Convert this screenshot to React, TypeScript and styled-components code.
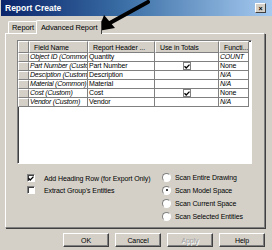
import React from 'react';
import styled, { createGlobalStyle } from 'styled-components';

const GlobalStyle = createGlobalStyle`
  html, body {
    margin: 0;
    padding: 0;
    background: #d4d0c8;
  }
  body {
    font-family: "Liberation Sans", Arial, sans-serif;
    font-size: 7px;
    letter-spacing: -0.1px;
    color: #000;
  }
`;

const Window = styled.div`
  position: relative;
  width: 272px;
  height: 250px;
  background: #d4d0c8;
  overflow: hidden;
  display: flex;
  flex-direction: column;
`;

const TitleBar = styled.div`
  height: 16px;
  margin: 0 0 0 1px;
  background: linear-gradient(to right, #0a246a 0%, #3a6ea5 45%, #a6caf0 100%);
  display: flex;
  align-items: center;
  justify-content: space-between;
  padding: 0 6px 0 4px;
`;

const Title = styled.span`
  color: #fff;
  font-weight: bold;
  font-size: 8.5px;
  letter-spacing: 0;
`;

const CloseBox = styled.div`
  width: 9px;
  height: 8px;
  background: #d4d0c8;
  border-top: 1px solid #fff;
  border-left: 1px solid #fff;
  border-right: 1px solid #404040;
  border-bottom: 1px solid #404040;
  display: flex;
  align-items: center;
  justify-content: center;
  font-size: 7px;
  font-weight: bold;
  line-height: 1;
`;

const TabStrip = styled.div`
  display: flex;
  align-items: flex-end;
  height: 17px;
  padding-left: 8px;
`;

const Tab = styled.div<{ $active?: boolean }>`
  position: relative;
  height: ${(p) => (p.$active ? 13 : 11)}px;
  padding: 0 ${(p) => (p.$active ? 4 : 3)}px;
  margin-left: ${(p) => (p.$active ? -2 : 0)}px;
  display: flex;
  align-items: center;
  font-size: 7.5px;
  border-top: 1px solid #fff;
  border-left: 1px solid #fff;
  border-right: 1px solid #404040;
  border-radius: 2px 2px 0 0;
  background: #d4d0c8;
  z-index: ${(p) => (p.$active ? 2 : 1)};
  margin-bottom: ${(p) => (p.$active ? -1 : 0)}px;
`;

const Panel = styled.div`
  margin: 0 7px 0 5px;
  height: 187px;
  border-top: 1px solid #fff;
  border-left: 1px solid #fff;
  border-right: 1px solid #808080;
  border-bottom: 1px solid #808080;
  box-shadow: 1px 1px 0 #404040;
  display: flex;
  flex-direction: column;
  padding: 6px 12px 0 11px;
`;

const ListBox = styled.div`
  height: 122px;
  background: #fff;
  border-top: 1px solid #808080;
  border-left: 1px solid #808080;
  border-right: 1px solid #fff;
  border-bottom: 1px solid #fff;
  box-shadow: inset 1px 1px 0 #404040;
  overflow: hidden;
`;

const Grid = styled.div`
  display: grid;
  grid-template-columns: 11px 59px 67px 64px 30px;
  grid-template-rows: 12px;
  grid-auto-rows: 9px;
  width: max-content;
`;

const HeadCell = styled.div`
  background: #d4d0c8;
  border-top: 1px solid #fff;
  border-left: 1px solid #fff;
  border-right: 1px solid #808080;
  border-bottom: 1px solid #808080;
  box-sizing: border-box;
  padding-left: 4px;
  display: flex;
  align-items: center;
  white-space: nowrap;
  overflow: hidden;
`;

const RowHead = styled.div`
  background: #d4d0c8;
  border-top: 1px solid #fff;
  border-left: 1px solid #fff;
  border-right: 1px solid #808080;
  border-bottom: 1px solid #808080;
  box-sizing: border-box;
`;

const Cell = styled.div<{ $italic?: boolean; $center?: boolean }>`
  border-right: 1px solid #808080;
  border-bottom: 1px solid #808080;
  box-sizing: border-box;
  padding-left: 1px;
  font-style: ${(p) => (p.$italic ? 'italic' : 'normal')};
  letter-spacing: ${(p) => (p.$italic ? '-0.2px' : '-0.1px')};
  white-space: nowrap;
  overflow: hidden;
  line-height: 8px;
  display: flex;
  align-items: center;
  justify-content: ${(p) => (p.$center ? 'center' : 'flex-start')};
`;

const MiniCheck = styled.div`
  width: 6px;
  height: 6px;
  border: 1px solid #808080;
  background: #fff;
  display: flex;
  align-items: center;
  justify-content: center;
`;

const Options = styled.div`
  display: flex;
  margin-top: 9px;
`;

const CheckCol = styled.div`
  width: 135px;
  padding-left: 10px;
  padding-top: 1px;
  display: flex;
  flex-direction: column;
  gap: 4px;
`;

const RadioCol = styled.div`
  display: flex;
  flex-direction: column;
  gap: 5px;
`;

const OptRow = styled.div`
  display: flex;
  align-items: center;
  height: 8px;
  white-space: nowrap;
`;

const CheckBox = styled.div`
  width: 6px;
  height: 6px;
  background: #fff;
  border-top: 1px solid #808080;
  border-left: 1px solid #808080;
  border-right: 1px solid #fff;
  border-bottom: 1px solid #fff;
  box-shadow: inset 1px 1px 0 #404040;
  margin-right: 9px;
  display: flex;
  align-items: center;
  justify-content: center;
`;

const Radio = styled.div<{ $on?: boolean }>`
  width: 7px;
  height: 7px;
  border-radius: 50%;
  background: #fff;
  border: 1px solid #808080;
  border-right-color: #fff;
  border-bottom-color: #fff;
  margin-right: 4px;
  display: flex;
  align-items: center;
  justify-content: center;
  &::after {
    content: '';
    width: 2px;
    height: 2px;
    border-radius: 50%;
    background: ${(p) => (p.$on ? '#000' : 'transparent')};
  }
`;

const Buttons = styled.div`
  display: flex;
  gap: 6px;
  padding-left: 63px;
  margin-top: 5px;
`;

const Button = styled.div<{ $disabled?: boolean }>`
  width: 46px;
  height: 14px;
  box-sizing: border-box;
  background: #d4d0c8;
  border-top: 1px solid #fff;
  border-left: 1px solid #fff;
  border-right: 1px solid #404040;
  border-bottom: 1px solid #404040;
  box-shadow: inset -1px -1px 0 #808080;
  display: flex;
  align-items: center;
  justify-content: center;
  color: ${(p) => (p.$disabled ? '#a0a0a0' : '#000')};
  text-shadow: ${(p) => (p.$disabled ? '1px 1px 0 #fff' : 'none')};
`;

const Arrow = styled.svg`
  position: absolute;
  left: 92px;
  top: 0;
  width: 60px;
  height: 36px;
  pointer-events: none;
`;

const Tick = () => (
  <svg width="6" height="5" viewBox="0 0 6 5">
    <path d="M0.5 2.2 L2.2 4 L5.5 0.6" stroke="#000" strokeWidth="1.3" fill="none" />
  </svg>
);

const rows = [
  { field: 'Object ID (Common)', header: 'Quantity', total: false, fn: 'COUNT', fnItalic: true },
  { field: 'Part Number (Custom)', header: 'Part Number', total: true, fn: 'None', fnItalic: false },
  { field: 'Desciption (Custom)', header: 'Description', total: false, fn: 'N/A', fnItalic: true },
  { field: 'Material (Common)', header: 'Material', total: false, fn: 'N/A', fnItalic: true },
  { field: 'Cost (Custom)', header: 'Cost', total: true, fn: 'None', fnItalic: false },
  { field: 'Vendor (Custom)', header: 'Vendor', total: false, fn: 'N/A', fnItalic: true },
];

export default function App() {
  return (
    <Window>
      <GlobalStyle />
      <TitleBar>
        <Title>Report Create</Title>
        <CloseBox>×</CloseBox>
      </TitleBar>
      <TabStrip>
        <Tab>Report</Tab>
        <Tab $active>Advanced Report</Tab>
      </TabStrip>
      <Panel>
        <ListBox>
          <Grid>
            <HeadCell />
            <HeadCell>Field Name</HeadCell>
            <HeadCell>Report Header ...</HeadCell>
            <HeadCell>Use in Totals</HeadCell>
            <HeadCell>Functi...</HeadCell>
            {rows.map((r) => (
              <React.Fragment key={r.field}>
                <RowHead />
                <Cell $italic>{r.field}</Cell>
                <Cell>{r.header}</Cell>
                <Cell $center>{r.total && <MiniCheck><Tick /></MiniCheck>}</Cell>
                <Cell $italic={r.fnItalic}>{r.fn}</Cell>
              </React.Fragment>
            ))}
          </Grid>
        </ListBox>
        <Options>
          <CheckCol>
            <OptRow>
              <CheckBox><Tick /></CheckBox>
              Add Heading Row (for Export Only)
            </OptRow>
            <OptRow>
              <CheckBox />
              Extract Group's Entities
            </OptRow>
          </CheckCol>
          <RadioCol>
            <OptRow><Radio />Scan Entire Drawing</OptRow>
            <OptRow><Radio $on />Scan Model Space</OptRow>
            <OptRow><Radio />Scan Current Space</OptRow>
            <OptRow><Radio />Scan Selected Entities</OptRow>
          </RadioCol>
        </Options>
      </Panel>
      <Buttons>
        <Button>OK</Button>
        <Button>Cancel</Button>
        <Button $disabled>Apply</Button>
        <Button>Help</Button>
      </Buttons>
      <Arrow viewBox="0 0 60 36">
        <path d="M56 2 L16 24" stroke="#000" strokeWidth="4" strokeLinecap="round" />
        <polygon points="6,31 12,15 23,28" fill="#000" />
      </Arrow>
    </Window>
  );
}
